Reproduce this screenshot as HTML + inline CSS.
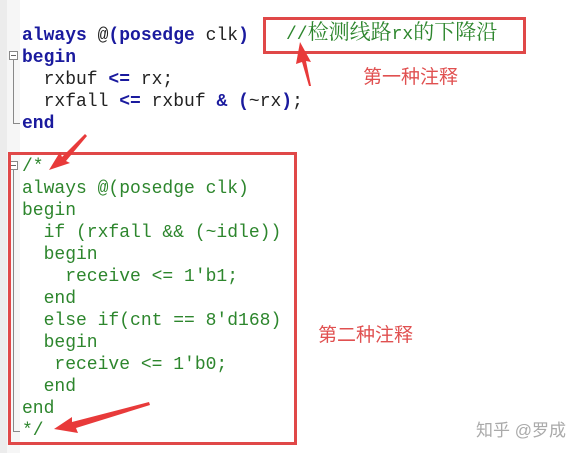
<!DOCTYPE html>
<html><head><meta charset="utf-8"><style>
body{margin:0;width:582px;height:453px;background:#fff;position:relative;overflow:hidden;font-family:"Liberation Mono",monospace;}
.g1{position:absolute;left:0;top:0;width:7px;height:453px;background:#ececec}
.g2{position:absolute;left:7px;top:0;width:13px;height:453px;background:#f6f6f6}
.l{position:absolute;left:22px;font-size:18px;line-height:22px;white-space:pre;color:#222;}
.k{color:#1a1a9e;font-weight:bold}
.c{color:#2d862d}
.box{position:absolute;border:3px solid #e04848;box-sizing:border-box}
.cn{position:absolute;font-family:"Liberation Sans","Noto Sans CJK SC",sans-serif;}
.fold{position:absolute;left:9px;width:9px;height:9px;border:1px solid #888;box-sizing:border-box;background:#fff}
.fold:after{content:"";position:absolute;left:1px;top:3px;width:5px;height:1px;background:#666}
.vl{position:absolute;left:13px;width:1px;background:#888}
</style></head><body>
<div class="g1"></div><div class="g2"></div>
<div class="fold" style="top:51px"></div>
<div class="vl" style="top:60px;height:63px"></div>
<div style="position:absolute;left:13px;top:123px;width:7px;height:1px;background:#888"></div>
<div class="fold" style="top:161px"></div>
<div class="vl" style="top:170px;height:262px"></div>
<div style="position:absolute;left:13px;top:431px;width:7px;height:1px;background:#888"></div>

<div class="l" style="top:25px"><span class="k">always</span> @<span class="k">(posedge</span> clk<span class="k">)</span></div>
<div class="l" style="top:47px"><span class="k">begin</span></div>
<div class="l" style="top:69px">  rxbuf <span class="k">&lt;=</span> rx;</div>
<div class="l" style="top:91px">  rxfall <span class="k">&lt;=</span> rxbuf <span class="k">&amp;</span> <span class="k">(</span>~rx<span class="k">)</span>;</div>
<div class="l" style="top:113px"><span class="k">end</span></div>

<div class="l c" style="top:156px">/*
always @(posedge clk)
begin
  if (rxfall &amp;&amp; (~idle))
  begin
    receive &lt;= 1'b1;
  end
  else if(cnt == 8'd168)
  begin
   receive &lt;= 1'b0;
  end
end
*/</div>

<div class="box" style="left:263px;top:17px;width:263px;height:37px"></div>
<div class="cn" style="left:286px;top:23px;font-size:21px;color:#2d862d;line-height:24px;font-family:'Liberation Mono','Noto Serif CJK SC',serif"><span style="font-size:18px">//</span>检测线路<span style="font-size:18px">rx</span>的下降沿</div>
<div class="cn" style="left:363px;top:62px;font-size:19px;color:#e05050">第一种注释</div>
<div class="box" style="left:8px;top:152px;width:289px;height:293px"></div>
<div class="cn" style="left:318px;top:320px;font-size:19px;color:#e05050">第二种注释</div>
<div class="cn" style="left:476px;top:416px;font-size:17px;color:#aaa">知乎 @罗成</div>

<svg style="position:absolute;left:0;top:0" width="582" height="453">
<g fill="#e83a3a">
<polygon points="300,42 311,62 306,61 311,86 309,86 302,62 296,64"/>
<polygon points="49,170 60,152 62,157 85,134 87,136 66,161 70,163"/>
<polygon points="54,429 72,417 72,422 149,402 150,405 76,428 78,433"/>
</g></svg>
</body></html>
